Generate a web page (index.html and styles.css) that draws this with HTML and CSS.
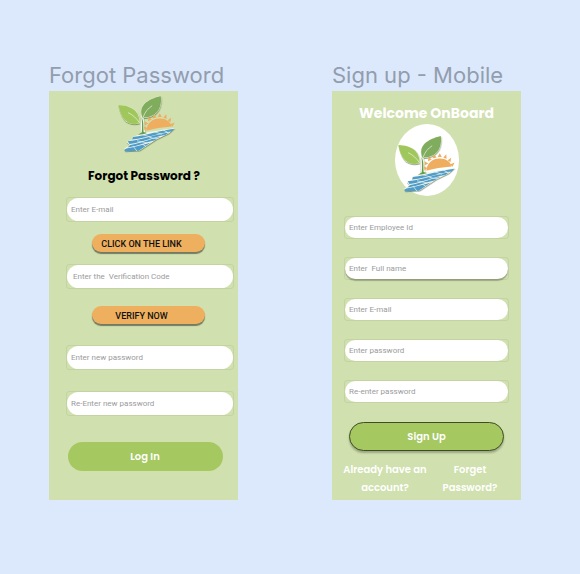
FILE: index.html
```
<!DOCTYPE html>
<html lang="en">
<head>
<meta charset="utf-8">
<meta name="viewport" content="width=device-width, initial-scale=1">
<title>Account screens</title>
<link rel="stylesheet" href="styles.css">
</head>
<body>
<svg class="defs" aria-hidden="true">
  <symbol id="logo" viewBox="18 12 174 180">
    <g class="logo-halo">
      <path d="M22 44C29 84 46 108 85 97C85 57 59 46 22 44Z"/>
      <path d="M146 17C106 26 75 47 92 82C132 81 151 56 146 17Z"/>
      <path d="M62 137L100 124L186 111L168 127L132 144L84 176L42 178L38 172L54 160L46 151L62 144Z"/>
      <path d="M92 48L100 128H86V96Z"/>
    </g>
    <g fill="#efad5f">
      <path d="M103 119C105 95 123 82 143 83C160 83 173 92 177 106C149 108 126 112 103 119Z"/>
      <path d="M98 118l-2-12 10 5zM99 103l-1-12 11 7zM108 91l1-13 10 8zM121 83l4-12 8 9zM136 79l6-11 6 11zM152 81l9-10 1 13zM165 88l10-7-2 13zM173 100l12-5-6 12z"/>
    </g>
    <g fill="#4f9ccb">
      <path d="M64 137C106 132 144 117 185 113L176 121C145 124 111 139 62 144Z"/>
      <path d="M49 149C94 145 130 129 169 124L158 131C125 136 95 152 54 157Z"/>
      <path d="M56 160C88 155 113 143 143 137L126 147C102 151 82 163 48 167Z"/>
      <path d="M45 170C70 166 93 160 116 153L81 177L42 179L39 174Z"/>
    </g>
    <path fill="none" stroke="#eef6ee" stroke-width="2" d="M92 130L118 138M125 121L148 129M76 148L106 154M112 139L138 142M64 163L76 178M92 158L102 164M151 116L166 124"/>
    <path fill="#9fc75b" d="M22 44C29 84 48 107 84 97C83 59 59 46 22 44Z"/>
    <path fill="#80ad5d" d="M145 18C107 27 77 47 92 81C131 80 150 56 145 18Z"/>
    <path fill="none" stroke="#eef5df" stroke-width="2" d="M50 66C64 73 75 82 84 97M94 79C99 64 108 54 120 46"/>
    <path fill="#629c4e" d="M89 80C96 90 94 105 95 122L105 125C97 128 88 129 78 131L90 123C91 108 91 92 89 80Z"/>
  </symbol>
</svg>
<main class="board">
  <section class="screen">
    <h2 class="screen-name">Forgot Password</h2>
    <form class="card reset">
      <svg class="logo" role="img" aria-label="Logo"><use href="#logo"/></svg>
      <h1 class="title">Forgot Password ?</h1>
      <div class="field"><input type="email" aria-label="E-mail" placeholder="Enter E-mail"></div>
      <button class="chip" type="button">CLICK ON THE LINK</button>
      <div class="field"><input class="code" type="text" aria-label="Verification code" placeholder="Enter the  Verification Code"></div>
      <button class="chip verify" type="button">VERIFY NOW</button>
      <div class="field"><input type="password" aria-label="New password" placeholder="Enter new password"></div>
      <div class="field"><input type="password" aria-label="Repeat new password" placeholder="Re-Enter new password"></div>
      <button class="primary" type="submit">Log In</button>
    </form>
  </section>
  <section class="screen">
    <h2 class="screen-name">Sign up - Mobile</h2>
    <form class="card signup">
      <h1 class="title">Welcome OnBoard</h1>
      <div class="badge"><svg class="logo" role="img" aria-label="Logo"><use href="#logo"/></svg></div>
      <div class="field"><input type="text" aria-label="Employee Id" placeholder="Enter Employee Id"></div>
      <div class="field raised"><input type="text" aria-label="Full name" placeholder="Enter  Full name"></div>
      <div class="field"><input type="email" aria-label="E-mail" placeholder="Enter E-mail"></div>
      <div class="field"><input type="password" aria-label="Password" placeholder="Enter password"></div>
      <div class="field"><input type="password" aria-label="Repeat password" placeholder="Re-enter password"></div>
      <button class="primary outlined" type="submit">Sign Up</button>
      <nav class="links">
        <a href="#login">Already have an account?</a>
        <a href="#forgot">Forget Password?</a>
      </nav>
    </form>
  </section>
</main>
</body>
</html>
```

FILE: styles.css
```
* {
  box-sizing: border-box;
}

body {
  margin: 0;
  min-height: 100vh;
  background: #dce9fc;
  font-family: Roboto, "Liberation Sans", sans-serif;
}

.defs {
  position: absolute;
  width: 0;
  height: 0;
}

.board {
  display: grid;
  grid-template-columns: 1fr 1fr;
  gap: 94px;
  padding: 59px 59px 74px 49px;
}

.screen {
  display: flex;
  flex-direction: column;
}

.screen-name {
  margin: 0;
  font: 400 22px/32px Inter, sans-serif;
  color: #929dad;
  white-space: nowrap;
}

.card {
  flex: 1;
  display: flex;
  flex-direction: column;
  background: #d0e0ae;
}

.reset {
  padding: 3px 4px 28px 17px;
}

.signup {
  padding: 12px 12px 3px;
}

.logo {
  display: block;
  width: 60px;
  height: 62px;
}

.logo-halo {
  fill: #f2f6e6;
  filter: drop-shadow(1px 3px 2px rgb(60 80 40 / 50%));
}

.title {
  margin: 0;
  font-family: Poppins, Inter, sans-serif;
  font-weight: 700;
  text-align: center;
  white-space: nowrap;
}

.reset .logo {
  margin-left: 51px;
}

.reset .title {
  margin: 10px 12px 11px 0;
  font-size: 12px;
  line-height: 20px;
  color: #000;
}

.signup .title {
  font-size: 14px;
  line-height: 20px;
  color: #fff;
}

.badge {
  align-self: center;
  width: 64px;
  height: 72px;
  margin: 1px 0 20px;
  padding: 10px 2px 0;
  border-radius: 50%;
  background: #fff;
}

.field {
  height: 25px;
  border: 1px solid #c3d3a2;
  border-radius: 3px;
}

.field input {
  display: block;
  width: 100%;
  height: 100%;
  padding: 0 4px;
  border: 0;
  border-radius: 12px;
  background: #fff;
  font: 400 8px/12px Roboto, sans-serif;
}

.field input::placeholder {
  color: #9b9b9b;
  opacity: 1;
}

.field .code {
  padding-left: 6px;
}

.signup .field {
  height: 23px;
  margin-bottom: 18px;
}

.signup .raised input {
  box-shadow: 0 2px 1px rgb(0 0 0 / 25%);
}

.chip {
  width: 113px;
  height: 18px;
  margin: 12px 0 12px 26px;
  padding: 2px 14px 0 0;
  border: 0;
  border-radius: 9px;
  background: #eeb05f;
  box-shadow: 0 2px 1px rgb(0 0 0 / 45%);
  font: 500 9px/16px Roboto, sans-serif;
  color: #111;
}

.reset .verify {
  margin-top: 17px;
  margin-bottom: 21px;
}

.reset .field + .field {
  margin-top: 21px;
}

.primary {
  align-self: center;
  width: 155px;
  height: 29px;
  border: 0;
  border-radius: 15px;
  background: #a5c861;
  font: 600 10px/16px Poppins, Inter, sans-serif;
  color: #fff;
}

.reset .primary {
  margin: 26px 10px 0 0;
}

.outlined {
  margin-top: 1px;
  border: 1px solid #3f4d26;
  box-shadow: 0 2px 2px rgb(0 0 0 / 25%);
}

.links {
  display: flex;
  justify-content: space-between;
  margin: 10px 9px 0 -3px;
  font: 600 10px/18px Poppins, Inter, sans-serif;
  text-align: center;
}

.links a {
  width: 88px;
  color: #fff;
  text-decoration: none;
}

.links a + a {
  width: 60px;
}
```
